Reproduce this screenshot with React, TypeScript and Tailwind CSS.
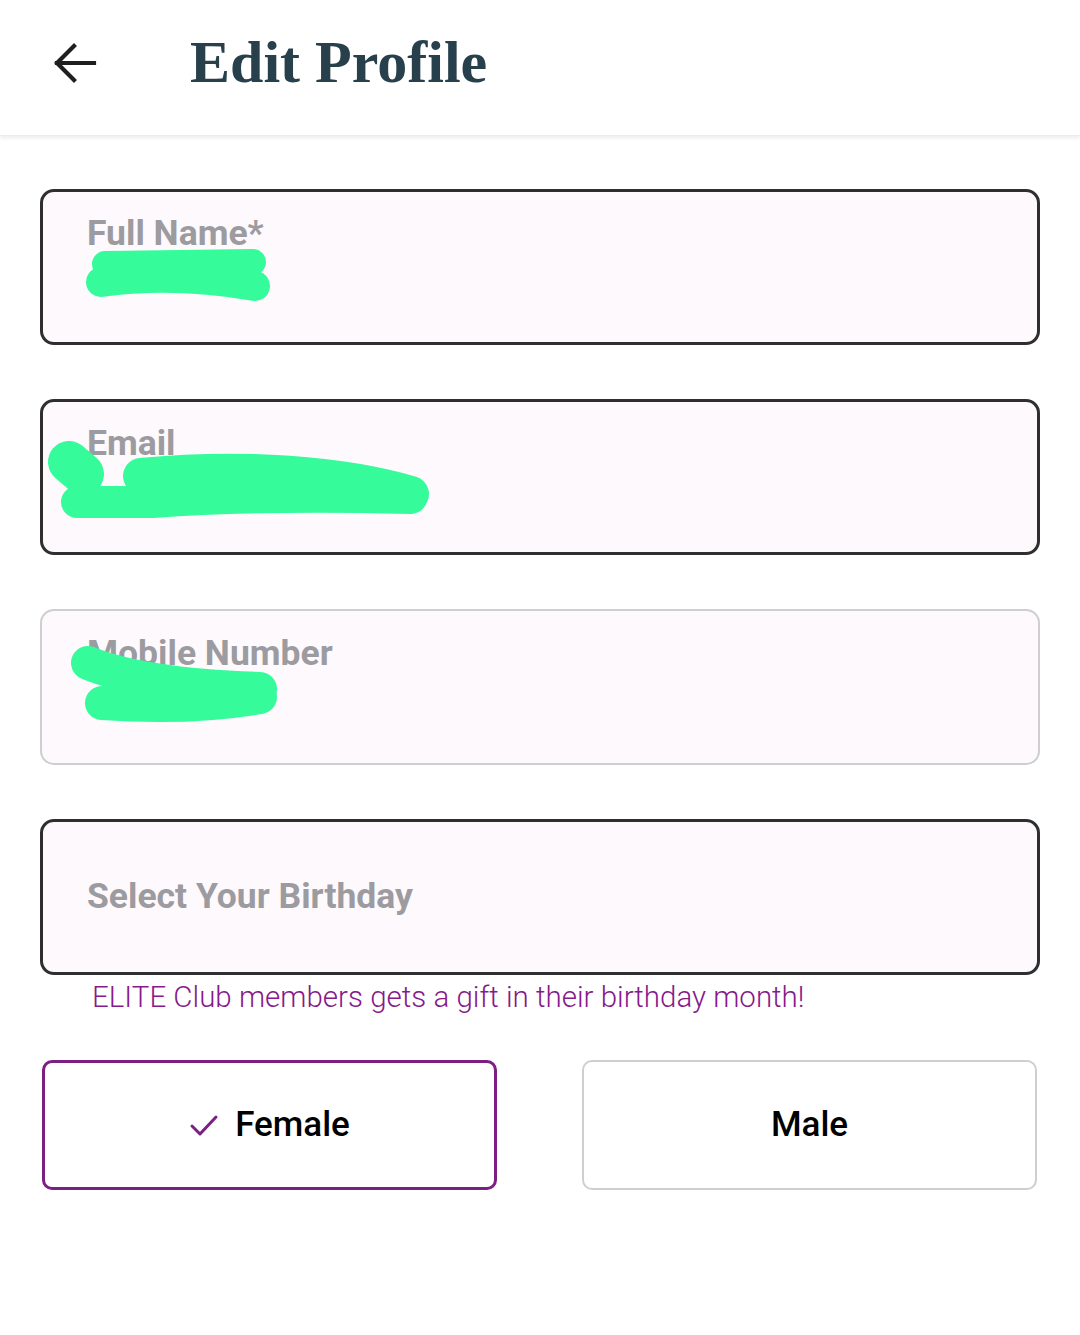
import React from "react";

const labelFont = { fontFamily: "Roboto, 'Liberation Sans', sans-serif" };

function Scribble({ paths }: { paths: { d: string; w: number }[] }) {
  return (
    <svg
      className="absolute left-0 top-0 pointer-events-none"
      width="1000"
      height="156"
      viewBox="0 0 1000 156"
    >
      {paths.map((p, i) => (
        <path
          key={i}
          d={p.d}
          fill="none"
          stroke="#35fb9b"
          strokeWidth={p.w}
          strokeLinecap="round"
          strokeLinejoin="round"
        />
      ))}
    </svg>
  );
}

function Field({
  label,
  active = true,
  scribble,
}: {
  label: string;
  active?: boolean;
  scribble: { d: string; w: number }[];
}) {
  return (
    <div
      className={`relative h-[156px] rounded-[14px] bg-[#fdf9fd] ${
        active ? "border-[3px] border-[#2f2f2f]" : "border-[2px] border-[#cfcfcf]"
      }`}
    >
      <div
        className={`${active ? "pl-[44px] pt-[24px]" : "pl-[45px] pt-[25px]"} text-[35.5px] leading-none font-bold text-[#9c9b9f]`}
        style={labelFont}
      >
        {label}
      </div>
      <Scribble paths={scribble} />
    </div>
  );
}

export default function App() {
  return (
    <div className="w-[1080px] min-h-[1335px] bg-white">
      <header className="h-[136px] flex items-center bg-white shadow-[0_2px_4px_rgba(0,0,0,0.08)] border-b border-[#ececec]">
        <div className="w-[190px] pl-[52px] flex items-center -mt-[10px]">
          <svg width="46" height="42" viewBox="0 0 46 42" fill="none">
            <path
              d="M42 21H5M22 4L5 21l17 17"
              stroke="#1f1f1f"
              strokeWidth="4.2"
              strokeLinecap="square"
            />
          </svg>
        </div>
        <h1
          className="text-[60px] font-bold leading-none text-[#283f4c] -mt-[12px]"
          style={{ fontFamily: "'Liberation Serif', 'DejaVu Serif', serif" }}
        >
          Edit Profile
        </h1>
      </header>

      <main className="px-[40px] pt-[53px] flex flex-col gap-[54px]">
        <Field
          label="Full Name*"
          scribble={[
            { d: "M62 72 L210 70", w: 26 },
            { d: "M58 90 Q 130 80 212 94", w: 30 },
          ]}
        />
        <Field
          label="Email"
          scribble={[
            { d: "M26 60 L40 72", w: 42 },
            { d: "M98 74 C 200 64 300 72 368 92", w: 36 },
            { d: "M34 100 L110 100 Q 220 92 368 96", w: 32 },
          ]}
        />
        <Field
          label="Mobile Number"
          active={false}
          scribble={[
            { d: "M46 52 Q 100 74 218 78", w: 34 },
            { d: "M60 92 Q 150 98 218 86", w: 34 },
          ]}
        />
        <div className="flex flex-col">
          <div className="h-[156px] rounded-[14px] bg-[#fdf9fd] border-[3px] border-[#2f2f2f] flex items-center pl-[44px]">
            <span
              className="text-[35.5px] leading-none font-bold text-[#9c9b9f]"
              style={labelFont}
            >
              Select Your Birthday
            </span>
          </div>
          <p
            className="pl-[52px] pt-[8px] text-[29.5px] leading-none font-light text-[#861a8a]"
            style={labelFont}
          >
            ELITE Club members gets a gift in their birthday month!
          </p>
        </div>
      </main>

      <div className="px-[42px] pt-[47px] flex gap-[85px]">
        <button className="w-[455px] h-[130px] rounded-[10px] border-[3px] border-[#7c1f83] bg-white flex items-center justify-center gap-[16px]">
          <svg width="30" height="24" viewBox="0 0 30 24" fill="none" className="mt-[2px]">
            <path d="M3 12l8 8L27 3" stroke="#7c1f83" strokeWidth="3" strokeLinecap="round" strokeLinejoin="round" />
          </svg>
          <span className="text-[35px] font-medium text-black leading-none" style={labelFont}>
            Female
          </span>
        </button>
        <button className="w-[455px] h-[130px] rounded-[10px] border-[2px] border-[#cfcfcf] bg-white flex items-center justify-center">
          <span className="text-[35px] font-medium text-black leading-none" style={labelFont}>
            Male
          </span>
        </button>
      </div>
    </div>
  );
}
